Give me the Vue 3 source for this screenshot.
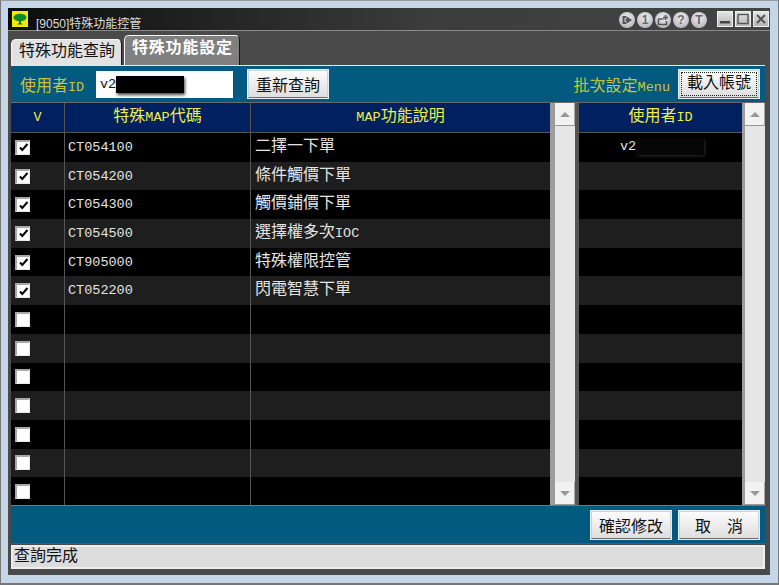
<template>
  <div class="window">
    <div class="titlebar">
      <svg class="logo" width="16" height="16" viewBox="0 0 16 16">
        <rect width="16" height="16" fill="#f5e800" />
        <ellipse cx="8" cy="6.5" rx="6.5" ry="3.8" fill="#0c8a2c" />
        <path d="M7 9h2v3l2 1.5H5L7 12z" fill="#0c7a2a" />
      </svg>
      <span class="title">[9050]特殊功能控管</span>
      <div class="tools">
        <span class="tool">
          <svg width="12" height="12" viewBox="0 0 12 12"><path d="M1.5 2h4v2H3.5v4h2v2h-4zM6 4.5V2.5L11 6l-5 3.5v-2H4.5v-3z" fill="#555" /></svg>
        </span>
        <span class="tool">1</span>
        <span class="tool">
          <svg width="12" height="12" viewBox="0 0 12 12"><path d="M1.5 5h5M1.5 5v5.5h8V7" fill="none" stroke="#555" stroke-width="1.5" /><path d="M8.5 1v5M6 3.5h5" stroke="#555" stroke-width="1.5" /></svg>
        </span>
        <span class="tool">?</span>
        <span class="tool">T</span>
      </div>
      <div class="caption">
        <span class="cap">
          <svg width="12" height="12" viewBox="0 0 12 12"><rect x="1" y="8" width="10" height="2.5" fill="#444" /></svg>
        </span>
        <span class="cap">
          <svg width="12" height="12" viewBox="0 0 12 12"><rect x="1" y="1.5" width="10" height="9" fill="none" stroke="#555" stroke-width="1.4" /></svg>
        </span>
        <span class="cap">
          <svg width="12" height="12" viewBox="0 0 12 12"><path d="M2 2L10 10M10 2L2 10" stroke="#555" stroke-width="2" /></svg>
        </span>
      </div>
    </div>

    <div class="client">
      <div class="tabs">
        <div class="tab">特殊功能查詢</div>
        <div class="tab active">特殊功能設定</div>
      </div>

      <div class="bar top-bar">
        <label class="yellow user-label">使用者<span class="lat">ID</span></label>
        <div class="input"><span class="lat">v2</span><span class="mask"></span></div>
        <button class="btn query-btn">重新查詢</button>
        <span class="yellow batch">批次設定<span class="lat">Menu</span></span>
        <button class="btn focused"><span class="focus-ring">載入帳號</span></button>
      </div>

      <div class="tables">
        <div class="grid left-grid">
          <div class="head">
            <div class="c-v"><span class="lat">V</span></div>
            <div class="c-code">特殊<span class="lat">MAP</span>代碼</div>
            <div class="c-desc"><span class="lat">MAP</span>功能說明</div>
          </div>
          <div v-for="(row, i) in rows" :key="i" class="row" :class="{ alt: i % 2 === 1 }">
            <div class="c-v">
              <span class="check">
                <svg v-if="row.code" width="11" height="11" viewBox="0 0 11 11"><path d="M2 5.5L4.3 8L9.5 2" fill="none" stroke="#000" stroke-width="2" /></svg>
              </span>
            </div>
            <div class="c-code"><span class="lat">{{ row.code }}</span></div>
            <div class="c-desc">{{ row.desc }}<span class="lat">{{ row.suffix }}</span></div>
          </div>
        </div>
        <div class="scroll wide">
          <span class="arrow"><i class="up"></i></span>
          <span class="arrow"><i class="down"></i></span>
        </div>

        <div class="grid right-grid">
          <div class="head"><div class="c-user">使用者<span class="lat">ID</span></div></div>
          <div v-for="(row, i) in rows" :key="i" class="row" :class="{ alt: i % 2 === 1 }">
            <div class="c-user user-cell">
              <template v-if="i === 0"><span class="lat">v2</span><span class="blur"></span></template>
            </div>
          </div>
        </div>
        <div class="scroll">
          <span class="arrow"><i class="up"></i></span>
          <span class="arrow"><i class="down"></i></span>
        </div>
      </div>

      <div class="bar bottom-bar">
        <button class="btn">確認修改</button>
        <button class="btn">取　消</button>
      </div>

      <div class="status">查詢完成</div>
    </div>
  </div>
</template>

<script setup>
const items = [
  { code: 'CT054100', desc: '二擇一下單' },
  { code: 'CT054200', desc: '條件觸價下單' },
  { code: 'CT054300', desc: '觸價鋪價下單' },
  { code: 'CT054500', desc: '選擇權多次', suffix: 'IOC' },
  { code: 'CT905000', desc: '特殊權限控管' },
  { code: 'CT052200', desc: '閃電智慧下單' }
]

const rows = Array.from({ length: 13 }, (_, i) => items[i] || { code: '', desc: '' })
</script>

<style>
html, body {
  margin: 0;
  background: #c4d6e8;
  overflow: hidden;
}
</style>

<style scoped>
.window {
  width: 779px;
  height: 585px;
  box-sizing: border-box;
  padding: 7px 8px 8px 7px;
  background: #c4d6e8;
  border: 1px solid #777;
  border-top-color: #9a9a9a;
  border-bottom-width: 2px;
  display: flex;
  flex-direction: column;
  font-family: "Liberation Mono", "Noto Sans CJK TC", monospace;
  font-size: 16px;
}

.lat {
  font-size: 13.5px;
}

.titlebar {
  height: 22px;
  flex: none;
  display: flex;
  align-items: center;
  background: linear-gradient(90deg, #0c0c0c, #3c3c3c 55%, #444);
  padding: 0 1px 0 4px;
  border-bottom: 1px solid #8a8a8a;
}

.logo {
  flex: none;
}

.title {
  margin-left: 8px;
  margin-top: 6px;
  font: 12px "Liberation Sans", "Noto Sans CJK TC", sans-serif;
  color: #ddd;
}

.tools {
  margin-left: auto;
  margin-top: 1px;
  display: flex;
  gap: 2px;
}

.tool {
  width: 16px;
  height: 16px;
  border-radius: 50%;
  display: flex;
  align-items: center;
  justify-content: center;
  background: radial-gradient(circle at 50% 35%, #eeeef2, #a8a8b0);
  color: #666;
  font: bold 12px/16px "Liberation Sans", sans-serif;
}

.caption {
  margin-left: 10px;
  display: flex;
  gap: 2px;
}

.cap {
  width: 16px;
  height: 16px;
  display: flex;
  align-items: center;
  justify-content: center;
  background: linear-gradient(#e4e4e4, #b4b4b4);
  border: 1px solid #f0f0f0;
  box-sizing: border-box;
}

.client {
  flex: 1;
  min-height: 0;
  display: flex;
  flex-direction: column;
  background: #4a4a4a;
  padding: 0 5px 6px 3px;
}

.tabs {
  height: 35px;
  flex: none;
  box-sizing: border-box;
  display: flex;
  align-items: flex-end;
  border-bottom: 1px solid #e8e8e8;
}

.tab {
  height: 26px;
  box-sizing: border-box;
  padding: 0 6px 0 7px;
  background: #e2e2e2;
  color: #111;
  line-height: 24px;
  border: 1px solid #111;
  border-top-color: #f4f4f4;
  border-left-color: #f4f4f4;
  border-bottom: none;
  border-radius: 5px 5px 0 0;
}

.tab.active {
  height: 30px;
  margin-left: 2px;
  background: #808080;
  color: #fff;
  font-weight: bold;
  letter-spacing: 0.8px;
  line-height: 26px;
}

.bar {
  flex: none;
  background: #025a80;
  display: flex;
  align-items: center;
}

.top-bar {
  height: 36px;
  padding: 0 5px 0 9px;
  border-bottom: 1px solid #6a6a6a;
}

.yellow {
  color: #c9c43c;
}

.user-label {
  width: 76px;
}

.input {
  width: 137px;
  height: 27px;
  background: #fff;
  display: flex;
  align-items: center;
  padding-left: 4px;
  box-sizing: border-box;
  color: #111;
}

.mask {
  width: 68px;
  height: 17px;
  background: #000;
  box-shadow: 1px 2px 3px #444;
}

.btn {
  font-family: inherit;
  font-size: 16px;
  color: #111;
  width: 82px;
  height: 30px;
  padding: 0;
  background: linear-gradient(#fcfcfc, #dedede);
  border: 2px solid #c8d4d8;
  border-bottom-color: #6a6a6a;
  outline: 1px solid #e8eef0;
  outline-offset: -1px;
}

.query-btn {
  margin-left: 14px;
}

.batch {
  margin-left: auto;
  margin-right: 8px;
}

.focused {
  padding: 1px;
}

.focus-ring {
  display: block;
  height: 100%;
  box-sizing: border-box;
  line-height: 22px;
  border: 1px dotted #222;
}

.tables {
  height: 402px;
  flex: none;
  display: flex;
  background: #555;
}

.grid {
  display: flex;
  flex-direction: column;
  background: #000;
  overflow: hidden;
}

.left-grid {
  width: 539px;
}

.right-grid {
  width: 163px;
}

.head {
  height: 30px;
  flex: none;
  display: flex;
  background: #002060;
  color: #eeee48;
  line-height: 29px;
  text-align: center;
  border-bottom: 1px solid #555;
  box-sizing: border-box;
}

.row {
  height: 28.7px;
  flex: none;
  display: flex;
  color: #e4e4e4;
  line-height: 28px;
  background: #000;
}

.row.alt {
  background: #1e1e1e;
}

.c-v {
  width: 54px;
  flex: none;
  display: flex;
  align-items: center;
  padding-left: 4px;
  box-sizing: border-box;
  border-right: 1px solid #555;
}

.head .c-v {
  justify-content: center;
  padding-left: 0;
}

.c-code {
  width: 186px;
  flex: none;
  box-sizing: border-box;
  padding-left: 3px;
  border-right: 1px solid #555;
}

.head .c-code {
  padding-left: 0;
}

.c-desc {
  flex: 1;
  padding-left: 4px;
}

.head .c-desc {
  padding-left: 0;
}

.c-user {
  flex: 1;
}

.user-cell {
  padding-left: 41px;
  display: flex;
  align-items: center;
}

.blur {
  width: 68px;
  height: 16px;
  background: #060606;
  box-shadow: 1px 1px 3px #2a2a2a;
}

.check {
  width: 15px;
  height: 15px;
  box-sizing: border-box;
  background: #fff;
  border: 2px solid #a8a8a8;
  border-right: 1px solid #e8e8e8;
  border-bottom: 1px solid #e8e8e8;
  display: flex;
  align-items: center;
  justify-content: center;
}

.scroll {
  width: 23px;
  flex: none;
  box-sizing: border-box;
  display: flex;
  flex-direction: column;
  justify-content: space-between;
  background: #e6e6e6;
  border-left: 3px solid #9c9c9c;
}

.scroll.wide {
  width: 25px;
  margin-right: 4px;
  border-left-width: 5px;
}

.arrow {
  height: 23px;
  box-sizing: border-box;
  display: flex;
  align-items: center;
  justify-content: center;
  background: #f2f2f2;
  border-bottom: 1px solid #999;
  border-right: 1px solid #aaa;
}

.arrow i {
  width: 0;
  height: 0;
  border-left: 5px solid transparent;
  border-right: 5px solid transparent;
}

.arrow .up {
  border-bottom: 5px solid #999;
}

.arrow .down {
  border-top: 5px solid #999;
}

.bottom-bar {
  height: 37px;
  justify-content: flex-end;
  gap: 6px;
  padding-right: 5px;
  border-top: 1px solid #777;
  border-bottom: 1px solid #555;
}

.status {
  height: 24px;
  flex: none;
  box-sizing: border-box;
  margin-top: 1px;
  padding-left: 1px;
  background: #dcdcdc;
  border: 2px solid #eee;
  color: #111;
  line-height: 20px;
}
</style>
